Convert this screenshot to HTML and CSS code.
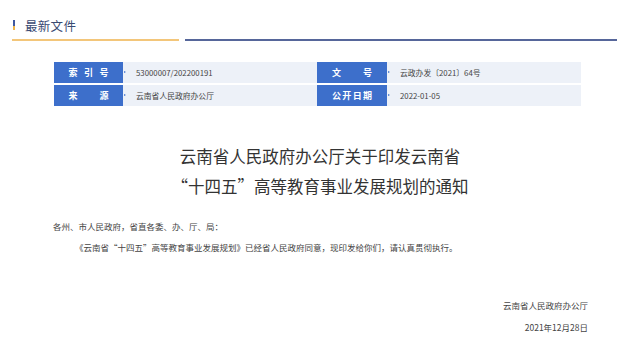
FILE: index.html
```html
<!DOCTYPE html>
<html lang="zh-CN">
  <head>
    <meta charset="UTF-8" />
    <meta name="viewport" content="width=device-width, initial-scale=1.0" />
    <title>最新文件</title>
    <link rel="stylesheet" href="styles.css">
  </head>
  <body>
    <section id="latestDocSection">
      <!-- Section Header -->
      <div class="doc-header">
        <div class="doc-header-title">
          <span class="mark"></span>
          <span class="text">最新文件</span>
        </div>
        <div class="doc-header-line">
          <span class="line-yellow"></span>
          <span class="line-blue"></span>
        </div>
      </div>

      <!-- Meta Table -->
      <div class="doc-meta">
        <div class="label"><span>索引号</span></div>
        <div class="value">53000007/202200191</div>
        <div class="label"><span>文号</span></div>
        <div class="value">云政办发〔2021〕64号</div>
        <div class="label"><span>来源</span></div>
        <div class="value">云南省人民政府办公厅</div>
        <div class="label"><span>公开日期</span></div>
        <div class="value">2022-01-05</div>
      </div>

      <!-- Title -->
      <h1 class="doc-title">
        云南省人民政府办公厅关于印发云南省<br />
        “十四五”高等教育事业发展规划的通知
      </h1>

      <!-- Body -->
      <div class="doc-body">
        <p class="greeting">各州、市人民政府，省直各委、办、厅、局：</p>
        <p class="content">《云南省“十四五”高等教育事业发展规划》已经省人民政府同意，现印发给你们，请认真贯彻执行。</p>
      </div>

      <!-- Signature -->
      <div class="doc-sign">
        <p>云南省人民政府办公厅</p>
        <p>2021年12月28日</p>
      </div>
    </section>
  </body>
</html>
```

FILE: styles.css
```css
html,
body {
  margin: 0;
  padding: 0;
  width: 100%;
  height: 100%;
  background: #fff;
  font-family: "Noto Sans CJK SC", "Noto Sans", sans-serif;
}

p,
h1 {
  margin: 0;
}

/* Header */
#latestDocSection .doc-header {
  margin: 0 23px 0 12px;
  padding-top: 17px;
}

#latestDocSection .doc-header-title {
  display: flex;
  align-items: center;
  height: 16px;
  padding-left: 1px;
}

#latestDocSection .doc-header-title .mark {
  display: block;
  width: 2px;
  height: 10px;
  background: linear-gradient(#3f58a0 60%, #f0b54a 60%);
}

#latestDocSection .doc-header-title .text {
  margin-left: 10px;
  font-size: 12.5px;
  color: #3a4a72;
  letter-spacing: 0.3px;
}

#latestDocSection .doc-header-line {
  display: flex;
  align-items: center;
  gap: 6px;
  margin-top: 6px;
}

#latestDocSection .doc-header-line .line-yellow {
  width: 167px;
  height: 2px;
  background: #f3c67a;
}

#latestDocSection .doc-header-line .line-blue {
  flex: 1;
  height: 2px;
  background: #56669a;
}

/* Meta Table */
#latestDocSection .doc-meta {
  display: grid;
  grid-template-columns: 69px 194px 70px 1fr;
  grid-auto-rows: 21px;
  row-gap: 2px;
  width: 527px;
  margin: 21px 0 0 54px;
}

#latestDocSection .doc-meta .label {
  position: relative;
  display: flex;
  align-items: center;
  justify-content: center;
  background: #3d6fcb;
  color: #fff;
  font-size: 9px;
  font-weight: bold;
}

#latestDocSection .doc-meta .label span {
  display: block;
  width: 40px;
  text-align: justify;
  text-align-last: justify;
}

#latestDocSection .doc-meta .label::after {
  content: "";
  position: absolute;
  top: 50%;
  right: -3px;
  margin-top: -1.5px;
  border-top: 1.5px solid transparent;
  border-bottom: 1.5px solid transparent;
  border-left: 2px solid #3d6fcb;
}

#latestDocSection .doc-meta .value {
  display: flex;
  align-items: center;
  padding-left: 13px;
  background: #edf1f8;
  color: #444;
  font-size: 7.8px;
}

/* Title */
#latestDocSection .doc-title {
  margin-top: 35px;
  font-size: 16.5px;
  font-weight: normal;
  line-height: 30px;
  text-align: center;
  color: #333;
}

/* Body */
#latestDocSection .doc-body {
  margin-top: 15px;
  padding-left: 53px;
  font-size: 8.5px;
  line-height: 21px;
  color: #444;
}

#latestDocSection .doc-body .content {
  text-indent: 22px;
}

/* Signature */
#latestDocSection .doc-sign {
  margin-top: 36px;
  padding-right: 52px;
  font-size: 8.5px;
  line-height: 22px;
  text-align: right;
  color: #444;
}
```
